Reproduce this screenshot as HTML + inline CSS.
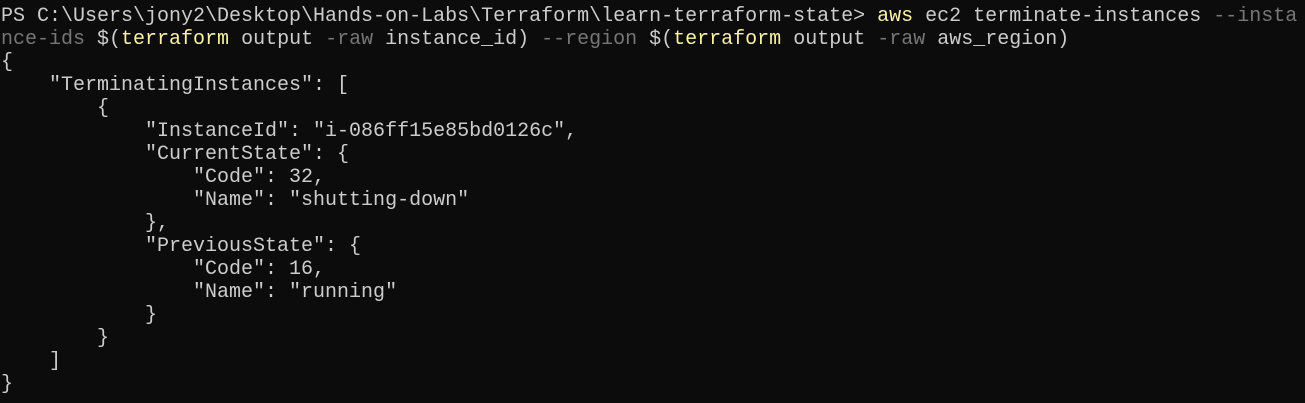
<!DOCTYPE html>
<html><head><style>
html,body{margin:0;padding:0;background:#0c0c0c;width:1305px;height:403px;overflow:hidden}
pre{margin:0;padding:5px 0 0 1px;font-family:"Liberation Mono",monospace;font-size:20px;line-height:23px;color:#cccccc;white-space:pre}
.y{color:#f9f1a5}.g{color:#767676}
</style></head><body><pre>PS C:\Users\jony2\Desktop\Hands-on-Labs\Terraform\learn-terraform-state&gt; <span class="y">aws</span> ec2 terminate-instances <span class="g">--insta</span>
<span class="g">nce-ids</span> $(<span class="y">terraform</span> output <span class="g">-raw</span> instance_id) <span class="g">--region</span> $(<span class="y">terraform</span> output <span class="g">-raw</span> aws_region)
{
    "TerminatingInstances": [
        {
            "InstanceId": "i-086ff15e85bd0126c",
            "CurrentState": {
                "Code": 32,
                "Name": "shutting-down"
            },
            "PreviousState": {
                "Code": 16,
                "Name": "running"
            }
        }
    ]
}</pre></body></html>
